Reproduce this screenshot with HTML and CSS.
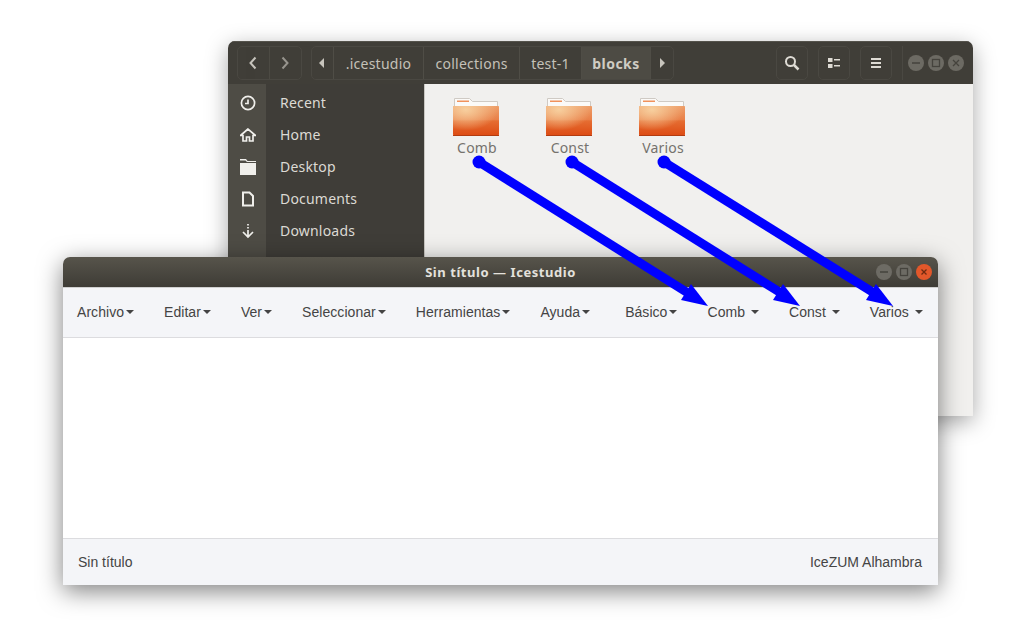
FILE: index.html
```html
<!DOCTYPE html>
<html lang="es">
<head>
<meta charset="UTF-8"/>
<meta name="viewport" content="width=device-width, initial-scale=1.0"/>
<title>Icestudio</title>
<link rel="stylesheet" href="styles.css">
</head>
<body>
  <svg width="0" height="0" class="defs">
    <defs>
      <linearGradient id="folderFill" x1="0" y1="0" x2="0" y2="1">
        <stop offset="0" stop-color="#ee9e68"/>
        <stop offset="0.45" stop-color="#e98048"/>
        <stop offset="0.5" stop-color="#e56d32"/>
        <stop offset="1" stop-color="#dd4a12"/>
      </linearGradient>
      <radialGradient id="folderGlow" cx="0.28" cy="0.12" r="0.7">
        <stop offset="0" stop-color="#f7cf9e" stop-opacity="1"/>
        <stop offset="1" stop-color="#f7cf9e" stop-opacity="0"/>
      </radialGradient>
      <symbol id="folder" viewBox="0 0 46 38">
        <path d="M1.500 .5h15l3 3h25v6H1.500z" fill="#fbfaf8" stroke="#cfcac4" stroke-width="1"/>
        <rect x="4" y="2.500" width="12" height="1.500" fill="#f0915c"/>
        <path d="M1 8h44c.6 0 1 .4 1 1v27c0 1-.6 2-2 2H2c-1.400 0-2-1-2-2V9c0-.6.4-1 1-1z" fill="url(#folderFill)"/>
        <path d="M1 8h44c.6 0 1 .4 1 1v27c0 1-.6 2-2 2H2c-1.400 0-2-1-2-2V9c0-.6.4-1 1-1z" fill="url(#folderGlow)"/>
        <rect y="37" width="46" height="1" fill="#b23c10"/>
      </symbol>
    </defs>
  </svg>

  <section class="win files">
    <header class="files-bar">
      <div class="group nav">
        <span class="cell nav-btn"><svg width="10" height="14" viewBox="0 0 10 14"><path d="M7.500 1.500 2.500 7l5 5.500" class="line"/></svg></span>
        <span class="cell nav-btn off"><svg width="10" height="14" viewBox="0 0 10 14"><path d="M2.500 1.500 7.500 7l-5 5.500" class="line"/></svg></span>
      </div>
      <div class="group path">
        <span class="cell arrow"><svg width="6" height="10" viewBox="0 0 6 10"><path d="M5 0v10L0 5z" fill="#c8c5bd"/></svg></span>
        <span class="cell crumb c1">.icestudio</span>
        <span class="cell crumb c2">collections</span>
        <span class="cell crumb c3">test-1</span>
        <span class="cell crumb now">blocks</span>
        <span class="cell arrow end"><svg width="6" height="10" viewBox="0 0 6 10"><path d="M1 0v10l5-5z" fill="#c8c5bd"/></svg></span>
      </div>
      <div class="spacer"></div>
      <div class="group tool"><svg width="16" height="16" viewBox="0 0 16 16"><circle cx="6.500" cy="6.500" r="4.500" class="line"/><path d="M10 10l4.500 4.500" class="line thick"/></svg></div>
      <div class="group tool"><svg width="12" height="10" viewBox="0 0 12 10"><path d="M0 0h4.500v4H0zM0 6h4.500v4H0zM6 1h6v1.500H6zM6 7h6v1.500H6z" fill="#dedbd4"/></svg></div>
      <div class="group tool"><svg width="10" height="10" viewBox="0 0 10 10"><path d="M0 0h10v2H0zM0 4h10v2H0zM0 8h10v2H0z" fill="#dedbd4"/></svg></div>
      <div class="divider"></div>
      <div class="controls">
        <span class="dot"><svg width="16" height="16" viewBox="0 0 16 16"><path d="M4 8h8" class="glyph"/></svg></span>
        <span class="dot"><svg width="16" height="16" viewBox="0 0 16 16"><rect x="4.500" y="4.500" width="7" height="7" class="glyph"/></svg></span>
        <span class="dot"><svg width="16" height="16" viewBox="0 0 16 16"><path d="M5 5l6 6M11 5l-6 6" class="glyph"/></svg></span>
      </div>
    </header>
    <div class="files-body">
      <aside class="side">
        <div class="side-row">
          <span class="side-icon"><svg width="16" height="16" viewBox="0 0 16 16"><circle cx="8" cy="8" r="6.600" class="side-line"/><path d="M8 4.500V8.500H5" class="side-line"/></svg></span>
          <span class="side-label">Recent</span>
        </div>
        <div class="side-row">
          <span class="side-icon"><svg width="16" height="16" viewBox="0 0 16 16"><path d="M8 2 .5 8.500h2.500V14h3.500v-4h3v4H13V8.500h2.500z" fill="none" stroke="#f0efeb" stroke-width="1.700"/></svg></span>
          <span class="side-label">Home</span>
        </div>
        <div class="side-row">
          <span class="side-icon"><svg width="16" height="16" viewBox="0 0 16 16"><path d="M0 0h6l1.500 2H16v1H7L5.500 1.500H0zM0 4h16v12H0z" fill="#f0efeb"/></svg></span>
          <span class="side-label">Desktop</span>
        </div>
        <div class="side-row">
          <span class="side-icon"><svg width="16" height="16" viewBox="0 0 16 16"><path d="M3 1.500h6.500L13 5v9.500H3z" fill="none" stroke="#f0efeb" stroke-width="2"/></svg></span>
          <span class="side-label">Documents</span>
        </div>
        <div class="side-row">
          <span class="side-icon"><svg width="16" height="16" viewBox="0 0 16 16"><path d="M8 1v1.500M8 4v1.500M8 7v6M3 9 8 14l5-5" class="side-line"/></svg></span>
          <span class="side-label">Downloads</span>
        </div>
      </aside>
      <main class="folders">
        <div class="folder"><svg width="46" height="38"><use href="#folder"/></svg><span>Comb</span></div>
        <div class="folder"><svg width="46" height="38"><use href="#folder"/></svg><span>Const</span></div>
        <div class="folder"><svg width="46" height="38"><use href="#folder"/></svg><span>Varios</span></div>
      </main>
    </div>
  </section>

  <section class="win studio">
    <header class="studio-title">
      <span class="studio-name">Sin título — Icestudio</span>
      <div class="controls studio-controls">
        <span class="dot"><svg width="16" height="16" viewBox="0 0 16 16"><path d="M4 8h8" class="glyph"/></svg></span>
        <span class="dot"><svg width="16" height="16" viewBox="0 0 16 16"><rect x="4.500" y="4.500" width="7" height="7" class="glyph"/></svg></span>
        <span class="dot close"><svg width="16" height="16" viewBox="0 0 16 16"><path d="M5.500 5.500l5 5M10.500 5.500l-5 5" class="glyph dark"/></svg></span>
      </div>
    </header>
    <nav class="menu">
      <a>Archivo<i class="caret"></i></a>
      <a>Editar<i class="caret"></i></a>
      <a>Ver<i class="caret"></i></a>
      <a>Seleccionar<i class="caret"></i></a>
      <a>Herramientas<i class="caret"></i></a>
      <a class="last-main">Ayuda<i class="caret"></i></a>
      <a>Básico<i class="caret"></i></a>
      <a>Comb<i class="caret wide"></i></a>
      <a>Const<i class="caret wide"></i></a>
      <a>Varios<i class="caret wide"></i></a>
    </nav>
    <div class="canvas"></div>
    <footer class="status">
      <span>Sin título</span>
      <span>IceZUM Alhambra</span>
    </footer>
  </section>

  <svg class="arrows" width="1028" height="636" viewBox="0 0 1028 636">
    <g class="arrow-set">
      <circle cx="479" cy="162" r="6.500"/><path d="M479 162 688 293" class="shaft"/><path d="M708 306 681 300 691 284z"/>
      <circle cx="572" cy="162" r="6.500"/><path d="M572 162 781 293" class="shaft"/><path d="M800 306 773 300 783 284z"/>
      <circle cx="664" cy="162" r="6.500"/><path d="M664 162 874 293" class="shaft"/><path d="M893 306 866 300 876 284z"/>
    </g>
  </svg>
</body>
</html>
```

FILE: styles.css
```css
body { margin: 0; width: 1028px; height: 636px; background: #fff; overflow: hidden; position: relative; font-family: "Noto Sans", sans-serif; }
.defs { position: absolute; }
.line { fill: none; stroke: #dedbd4; stroke-width: 2; }
.line.thick { stroke-width: 2.500; }
.glyph { fill: none; stroke: #45433d; stroke-width: 1.300; }
.glyph.dark { stroke: #6e2a10; }
.side-line { fill: none; stroke: #f0efeb; stroke-width: 1.700; }

/* windows sit on a free desktop */
.win { position: absolute; }
.files { left: 228px; top: 41px; width: 745px; height: 375px; border-radius: 7px 7px 0 0; box-shadow: 0 6px 22px rgba(0,0,0,.35); background: #f1f0ee; overflow: hidden; }
.studio { left: 63px; top: 257px; width: 875px; height: 328px; display: flex; flex-direction: column; border-radius: 7px 7px 0 0; box-shadow: 0 6px 24px rgba(0,0,0,.5); background: #fff; overflow: hidden; }

.files-bar { height: 43px; box-sizing: border-box; padding: 4px 0 4px 9px; display: flex; background: #403e38; border-top: 1px solid #55534c; }
.group { height: 34px; display: flex; border: 1px solid #4a4842; border-radius: 5px; box-sizing: border-box; }
.cell { display: flex; align-items: center; justify-content: center; height: 100%; border-right: 1px solid #4f4d46; box-sizing: border-box; }
.nav { width: 65px; }
.nav-btn { width: 32px; opacity: .85; }
.nav-btn:last-child { border-right: none; }
.nav-btn.off { opacity: .55; }
.path { margin-left: 9px; width: 363px; color: #c4c1b8; font-size: 14px; letter-spacing: .25px; }
.arrow { width: 22px; }
.arrow.end { width: 22px; border-right: none; }
.crumb.c1 { width: 91px; }
.crumb.c2 { width: 97px; }
.crumb.c3 { width: 62px; }
.crumb.now { width: 70px; font-weight: 700; letter-spacing: .5px; background: #4d4b44; color: #cfccc3; }
.spacer { flex: 1; }
.tool { width: 32px; margin-left: 10px; align-items: center; justify-content: center; }
.divider { width: 1px; height: 34px; margin-left: 10px; background: #4a4842; }
.controls { display: flex; gap: 4px; align-items: center; margin-left: 5px; padding-right: 9px; }
.dot { width: 16px; height: 16px; border-radius: 50%; background: #6c6a63; display: block; }
.dot svg { display: block; }

.files-body { display: flex; height: 332px; }
.side { width: 197px; box-sizing: border-box; padding-top: 3px; background: linear-gradient(90deg, #4e4c45 38px, #3f3d38 38px); border-right: 1px solid #c9c7c2; color: #dcdad4; font-size: 14px; letter-spacing: .2px; }
.side-row { height: 32px; display: flex; align-items: center; }
.side-icon { width: 52px; display: flex; justify-content: flex-start; padding-left: 12px; box-sizing: border-box; }
.side-label { margin-top: -2px; }
.folders { display: flex; gap: 33px; padding: 14px 0 0 21px; }
.folder { width: 60px; display: flex; flex-direction: column; align-items: center; color: #75726d; font-size: 14px; letter-spacing: .2px; line-height: 19px; }
.folder svg { display: block; margin-bottom: 2px; }
.folder span { padding-left: 2px; }

.studio-title { height: 31px; flex: none; position: relative; display: flex; align-items: center; justify-content: center; background: linear-gradient(#57544b, #3e3c36); color: #e3e1dc; font-size: 13px; font-weight: 700; letter-spacing: .55px; border-bottom: 1px solid #d0d0d0; box-sizing: border-box; }
.studio-controls { position: absolute; right: 6px; top: 7px; padding-right: 0; margin: 0; }
.studio-controls .dot { background: #6d6b64; }
.studio-controls .close { background: #e2572a; }

.menu { height: 50px; flex: none; box-sizing: border-box; display: flex; align-items: center; gap: 30px; padding: 0 0 2px 14px; background: #f4f5f8; border-bottom: 1px solid #dcdcdf; color: #444; font-family: "Liberation Sans", sans-serif; font-size: 14px; letter-spacing: .05px; }
.menu a { display: flex; align-items: center; }
.last-main { margin-right: 5px; }
.caret { width: 0; height: 0; margin-left: 2px; border-top: 4px solid #444; border-left: 4px solid transparent; border-right: 4px solid transparent; }
.caret.wide { margin-left: 6px; }
.canvas { flex: 1; background: #fff; }
.status { height: 47px; flex: none; box-sizing: border-box; display: flex; align-items: center; justify-content: space-between; padding: 0 16px 0 15px; background: #f4f5f8; border-top: 1px solid #dcdcdf; color: #444; font-family: "Liberation Sans", sans-serif; font-size: 14px; }

.arrows { position: absolute; left: 0; top: 0; }
.arrow-set { fill: #0000ff; }
.shaft { fill: none; stroke: #0000ff; stroke-width: 9; }
```
